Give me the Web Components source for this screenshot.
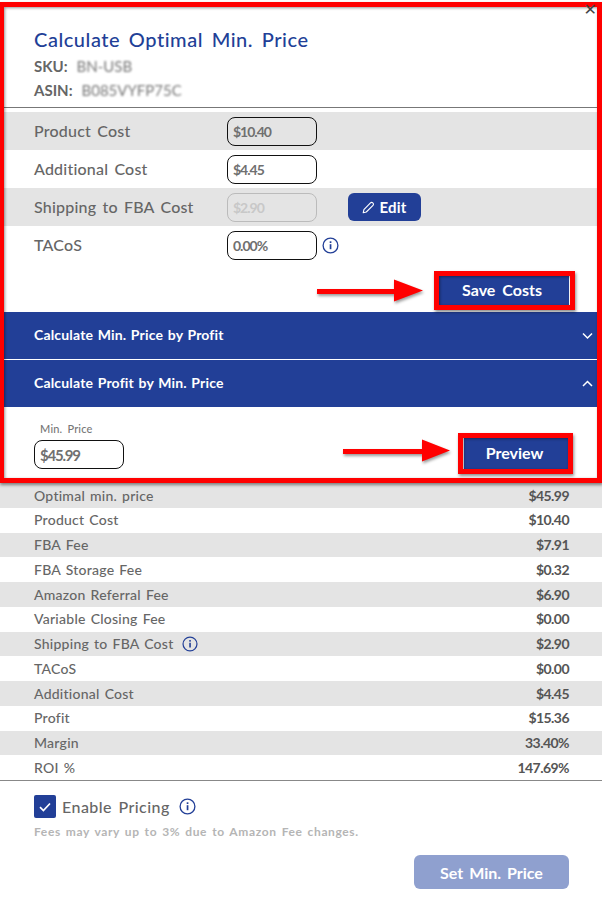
<!DOCTYPE html>
<html>
<head>
<meta charset="utf-8">
<title>Calculate Optimal Min. Price</title>
<style>
html,body{margin:0;padding:0;background:#fff;}
body{font-family:"Lato","Liberation Sans",sans-serif;color:#666;width:602px;height:902px;overflow:hidden;}
</style>
</head>
<body>
<price-modal></price-modal>
<script>
const BLUE = '#223f97'
const base = `*{box-sizing:border-box;}`

class InfoIcon extends HTMLElement {
    constructor() {
        super()
        this.attachShadow({ mode: 'open' }).innerHTML = `
        <style>
        :host{display:inline-flex;width:17px;height:17px;}
        svg{width:100%;height:100%;}
        </style>
        <svg viewBox="0 0 17 17" fill="none"><circle cx="8.5" cy="8.5" r="7.4" stroke="${BLUE}" stroke-width="1.3"/><rect x="7.7" y="7.2" width="1.7" height="5" fill="${BLUE}"/><rect x="7.7" y="4.3" width="1.7" height="1.7" fill="${BLUE}"/></svg>`
    }
}
customElements.define('info-icon', InfoIcon)

class CostRow extends HTMLElement {
    constructor() {
        super()
        const disabled = this.hasAttribute('disabled')
        this.attachShadow({ mode: 'open' }).innerHTML = `
        <style>
        ${base}
        :host{display:flex;align-items:center;height:38px;padding-left:34px;font-size:16px;font-weight:500;color:#666;word-spacing:2px;letter-spacing:.2px;}
        :host([shade]){background:#e4e4e4;}
        .label{width:193px;padding-bottom:2px;}
        .box{width:90px;height:29px;border:1px solid ${disabled ? '#bbb' : '#111'};border-radius:8px;display:flex;align-items:center;padding-left:5px;font-size:14px;font-weight:700;letter-spacing:-1px;color:${disabled ? '#c8c8c8' : '#707070'};}
        .after{display:flex;align-items:center;}
        </style>
        <div class="label">${this.getAttribute('label')}</div>
        <div class="box">${this.getAttribute('value')}</div>
        <div class="after"><slot></slot></div>`
    }
}
customElements.define('cost-row', CostRow)

class EditButton extends HTMLElement {
    constructor() {
        super()
        this.attachShadow({ mode: 'open' }).innerHTML = `
        <style>
        ${base}
        :host{display:flex;align-items:center;justify-content:center;gap:4px;margin-left:31px;width:73px;height:28px;background:${BLUE};border-radius:6px;color:#fff;font-size:15px;font-weight:700;}
        svg{width:13px;height:13px;}
        </style>
        <svg viewBox="0 0 13 13" fill="none" stroke="#fff" stroke-width="1.1" stroke-linejoin="round"><path d="M1.2 11.8l.7-3.2 6.6-6.800c.6-.6 1.6-.6 2.2 0l.3.3c.6.6.6 1.6 0 2.2l-6.7 6.700z"/></svg>
        <span>Edit</span>`
    }
}
customElements.define('edit-button', EditButton)

class AccordionBar extends HTMLElement {
    constructor() {
        super()
        const d = this.hasAttribute('open') ? 'M1 6l4.5-4.5L10 6' : 'M1 1.5L5.5 6 10 1.5'
        this.attachShadow({ mode: 'open' }).innerHTML = `
        <style>
        ${base}
        :host{display:flex;align-items:center;justify-content:space-between;height:47px;padding:0 9px 0 34px;background:${BLUE};color:#fff;font-size:14px;font-weight:700;word-spacing:1px;letter-spacing:.17px;}
        span{padding-bottom:2px;}
        svg{width:11px;height:8px;}
        </style>
        <span>${this.getAttribute('label')}</span>
        <svg viewBox="0 0 11 8" fill="none" stroke="#fff" stroke-width="1.5"><path d="${d}"/></svg>`
    }
}
customElements.define('accordion-bar', AccordionBar)

class BlueButton extends HTMLElement {
    constructor() {
        super()
        this.attachShadow({ mode: 'open' }).innerHTML = `
        <style>
        ${base}
        :host{display:flex;align-items:center;justify-content:center;background:${BLUE};color:#fff;font-size:16px;font-weight:700;word-spacing:3px;padding:0 4px 2px 0;}
        </style>
        <slot></slot>`
    }
}
customElements.define('blue-button', BlueButton)

class FeeRow extends HTMLElement {
    constructor() {
        super()
        this.attachShadow({ mode: 'open' }).innerHTML = `
        <style>
        ${base}
        :host{display:flex;align-items:center;justify-content:space-between;height:24.75px;padding:0 33px .6px 34px;font-size:14px;font-weight:500;color:#666;word-spacing:1.2px;letter-spacing:.25px;}
        :host(:nth-child(odd)){background:#e4e4e4;}
        .left{display:flex;align-items:center;gap:9px;}
        .val{font-weight:700;color:#555;letter-spacing:-.55px;}
        info-icon{width:16px;height:16px;}
        </style>
        <div class="left"><span>${this.getAttribute('label')}</span>${this.hasAttribute('info') ? '<info-icon></info-icon>' : ''}</div>
        <div class="val">${this.getAttribute('value')}</div>`
    }
}
customElements.define('fee-row', FeeRow)

// the red boxes and arrows somebody drew over the screenshot
class RedMarks extends HTMLElement {
    constructor() {
        super()
        this.attachShadow({ mode: 'open' }).innerHTML = `
        <style>
        ${base}
        :host{position:absolute;left:0;top:0;width:602px;height:902px;pointer-events:none;display:block;}
        .box{position:absolute;border:5px solid #f00;box-shadow:1px 2px 3px rgba(0,0,0,.45),inset 1px 1px 3px rgba(0,0,0,.4);}
        svg{position:absolute;left:0;top:0;filter:drop-shadow(1px 2px 1.5px rgba(0,0,0,.4));}
        </style>
        <div class="box" style="left:-1px;top:2px;width:603px;height:481px"></div>
        <div class="box" style="left:434px;top:271px;width:141px;height:39px"></div>
        <div class="box" style="left:458px;top:433px;width:115px;height:41px"></div>
        <svg width="602" height="902" fill="#f00">
            <path d="M317 289h77v-9.500l29 11-29 11V294h-77z"/>
            <path d="M343 449h79v-9.500l28 11-28 11V454h-79z"/>
        </svg>`
    }
}
customElements.define('red-marks', RedMarks)

class PriceModal extends HTMLElement {
    constructor() {
        super()
        this.attachShadow({ mode: 'open' }).innerHTML = `
        <style>
        ${base}
        :host{display:block;position:relative;width:602px;height:902px;background:#fff;color:#666;}
        header{height:108px;padding:27px 0 0 34px;border-bottom:1px solid #777;}
        h1{margin:0 0 3px;font-size:20px;line-height:24px;font-weight:500;color:${BLUE};word-spacing:3px;letter-spacing:.55px;}
        .id{font-size:15px;line-height:24px;font-weight:700;color:#666;display:flex;gap:9px;}
        .blur{font-weight:400;filter:blur(1.2px);color:#777;font-size:15px;}
        .close{position:absolute;right:5px;top:2px;font:16px/16px "DejaVu Sans",sans-serif;color:#444;z-index:2;}
        .costs{padding-top:4px;}
        .save{display:flex;justify-content:flex-end;height:48px;padding:12px 33px 0 0;}
        .save blue-button{width:130px;height:29px;}
        .price{height:76px;display:flex;justify-content:space-between;padding:15px 34px 0 34px;}
        .price label{display:block;font-size:11px;line-height:13px;font-weight:500;color:#777;padding-left:6px;word-spacing:2px;letter-spacing:.2px;}
        .price .box{margin-top:5px;width:90px;height:29px;border:1px solid #111;border-radius:8px;display:flex;align-items:center;padding-left:5px;font-size:15px;font-weight:700;letter-spacing:-1.2px;color:#707070;}
        .price blue-button{width:105px;height:31px;margin-top:16px;margin-right:-1px;}
        .fees{height:298px;margin-top:0;border-bottom:1px solid #888;}
        .enable{display:flex;align-items:center;padding:14px 0 0 34px;font-size:16px;font-weight:500;color:#666;word-spacing:2px;letter-spacing:.45px;}
        .check{width:22px;height:23px;background:${BLUE};border-radius:2px;display:flex;align-items:center;justify-content:center;margin-right:6px;}
        .check svg{width:12px;height:10px;}
        .enable info-icon{margin-left:9px;}
        .note{padding:7px 0 0 34px;font-size:12px;line-height:14px;color:#b5b5b5;font-weight:700;word-spacing:1.5px;letter-spacing:.62px;}
        .foot{display:flex;justify-content:flex-end;padding:16px 33px 0 0;}
        .set{width:155px;height:34px;background:#8fa0cf;border-radius:6px;display:flex;align-items:center;justify-content:center;color:#fff;font-size:16px;font-weight:700;word-spacing:2px;}
        </style>
        <div class="close">&#x2715;</div>
        <header>
            <h1>Calculate Optimal Min. Price</h1>
            <div class="id"><span>SKU:</span><span class="blur">BN-USB</span></div>
            <div class="id"><span>ASIN:</span><span class="blur">B085VYFP75C</span></div>
        </header>
        <section class="costs">
            <cost-row shade label="Product Cost" value="$10.40"></cost-row>
            <cost-row label="Additional Cost" value="$4.45"></cost-row>
            <cost-row shade disabled label="Shipping to FBA Cost" value="$2.90"><edit-button></edit-button></cost-row>
            <cost-row label="TACoS" value="0.00%"><info-icon style="margin-left:5px"></info-icon></cost-row>
        </section>
        <div class="save"><blue-button>Save Costs</blue-button></div>
        <accordion-bar label="Calculate Min. Price by Profit"></accordion-bar>
        <div style="height:1px;background:#fff"></div>
        <accordion-bar open label="Calculate Profit by Min. Price"></accordion-bar>
        <div class="price">
            <div><label>Min. Price</label><div class="box">$45.99</div></div>
            <blue-button>Preview</blue-button>
        </div>
        <section class="fees">
            <fee-row label="Optimal min. price" value="$45.99"></fee-row>
            <fee-row label="Product Cost" value="$10.40"></fee-row>
            <fee-row label="FBA Fee" value="$7.91"></fee-row>
            <fee-row label="FBA Storage Fee" value="$0.32"></fee-row>
            <fee-row label="Amazon Referral Fee" value="$6.90"></fee-row>
            <fee-row label="Variable Closing Fee" value="$0.00"></fee-row>
            <fee-row info label="Shipping to FBA Cost" value="$2.90"></fee-row>
            <fee-row label="TACoS" value="$0.00"></fee-row>
            <fee-row label="Additional Cost" value="$4.45"></fee-row>
            <fee-row label="Profit" value="$15.36"></fee-row>
            <fee-row label="Margin" value="33.40%"></fee-row>
            <fee-row label="ROI %" value="147.69%"></fee-row>
        </section>
        <div class="enable">
            <div class="check"><svg viewBox="0 0 12 10" fill="none" stroke="#fff" stroke-width="1.7"><path d="M1 5.200l3.400 3.300L11 1.500"/></svg></div>
            <span>Enable Pricing</span><info-icon></info-icon>
        </div>
        <div class="note">Fees may vary up to 3% due to Amazon Fee changes.</div>
        <div class="foot"><div class="set">Set Min. Price</div></div>
        <red-marks></red-marks>`
    }
}
customElements.define('price-modal', PriceModal)
</script>
</body>
</html>
